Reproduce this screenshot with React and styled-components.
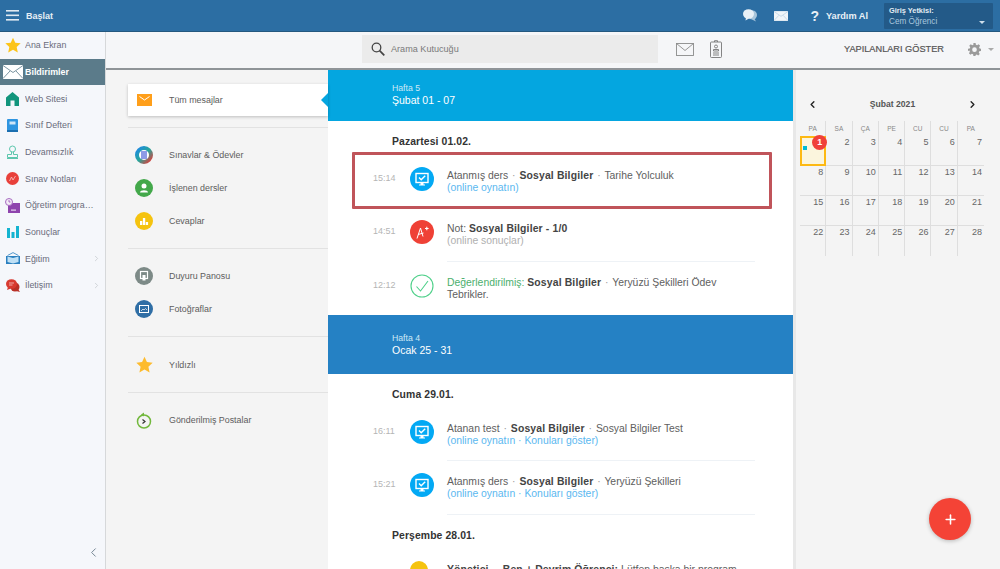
import React from 'react';
import styled, { createGlobalStyle } from 'styled-components';
import { ChevronLeft, ChevronRight, Plus } from 'lucide-react';

const GlobalStyle = createGlobalStyle`
  html, body { margin: 0; height: 100%; overflow: hidden; }
  body { font-family: "Liberation Sans", Arial, sans-serif; background: #f4f4f4; color: #555; }
  *, *::before, *::after { box-sizing: border-box; }
`;

// * =================================
// *       Icons
// * =================================
const Star = ({ size = 16, color = '#fcc419' }) => (
  <svg width={size} height={size} viewBox="0 0 24 24"><path fill={color} d="M12 1l3.4 7.6 8.1.9-6 5.5 1.7 8.2L12 19l-7.2 4.2 1.7-8.2-6-5.5 8.1-.9z" /></svg>
);
const Envelope = ({ w = 20, h = 14, color = '#fff', line = '#5b7b8a' }) => (
  <svg width={w} height={h} viewBox="0 0 20 14"><rect width="20" height="14" fill={color} /><path d="M0 .5l10 7 10-7M0 13.5l7-7.5M20 13.5l-7-7.5" fill="none" stroke={line} strokeWidth=".8" /></svg>
);
const House = () => (
  <svg width="13" height="14" viewBox="0 0 13 14"><path fill="#12957c" d="M6.500 0L13 5.500V14H8.500V8.500h-4V14H0V5.500z" /></svg>
);
const Book = () => (
  <svg width="11" height="13" viewBox="0 0 11 13"><rect width="11" height="13" rx="1" fill="#2f95e0" /><rect x="2.500" y="2.500" width="6" height="3" fill="#cfe6f8" /><rect y="11" width="11" height="2" fill="#1b6fb0" /></svg>
);
const Stamp = () => (
  <svg width="13" height="14" viewBox="0 0 13 14" fill="none" stroke="#5cc6ad" strokeWidth="1"><circle cx="6.500" cy="4" r="3" /><path d="M5.500 7v2.500H1.500v3h10v-3h-4V7M1 13.500h11" /></svg>
);
const GradeBadge = () => (
  <svg width="13" height="13" viewBox="0 0 13 13"><circle cx="6.500" cy="6.500" r="6.500" fill="#e8403a" /><path d="M3.500 9l2-4 1.500 3 2.500-4" fill="none" stroke="#f6c9c6" strokeWidth=".8" /></svg>
);
const Planner = () => (
  <svg width="15" height="15" viewBox="0 0 15 15"><rect x="3" y="5" width="12" height="10" fill="#8e44ad" /><rect x="6" y="11.500" width="5" height="1.200" fill="#e5d4ee" /><circle cx="4" cy="4" r="3.500" fill="#f3eaf7" stroke="#a66bc0" /><path d="M4 2v2h1.500" fill="none" stroke="#8e44ad" strokeWidth=".7" /></svg>
);
const Bars = () => (
  <svg width="12" height="12" viewBox="0 0 12 12" fill="#14b4d0"><rect y="2" width="3" height="10" /><rect x="4.500" y="6" width="3" height="6" /><rect x="9" width="3" height="12" /></svg>
);
const OpenBook = () => (
  <svg width="14" height="13" viewBox="0 0 14 13"><path fill="#2a7fbf" d="M0 4h14v8H0z" /><path fill="#bfe0f5" d="M1.500 4.500L7 6v5.500L1.500 10zM12.500 4.500L7 6v5.500l5.500-1.500z" /><path fill="none" stroke="#2a7fbf" strokeWidth=".8" d="M1.500 3.500L7 .6l5.500 2.900" /></svg>
);
const Bubbles = () => (
  <svg width="14" height="13" viewBox="0 0 14 13"><circle cx="9" cy="8" r="4.500" fill="#b93027" /><path fill="#b93027" d="M12 10l2 3-4-1z" /><ellipse cx="5.500" cy="5" rx="5.500" ry="4.800" fill="#d83a30" /><path fill="#d83a30" d="M2 8l-1 3 4-1.500z" /><path stroke="#f6c9c6" strokeWidth=".8" d="M3 4h5M3 6h3.500" /></svg>
);
const Hamburger = () => (
  <svg width="13" height="11" viewBox="0 0 13 11" fill="#dfe9f2"><rect width="13" height="1.600" /><rect y="4.500" width="13" height="1.600" /><rect y="9" width="13" height="1.600" /></svg>
);
const Chat = () => (
  <svg width="14" height="13" viewBox="0 0 14 13"><ellipse cx="9.500" cy="6" rx="4.500" ry="4.500" fill="#a9c6dc" /><path fill="#a9c6dc" d="M11 9l2 3.500-4-2z" /><ellipse cx="5.500" cy="5" rx="5.500" ry="4.800" fill="#e8f0f6" /><path fill="#e8f0f6" d="M3 8.500l-.5 3L6 9.500z" /></svg>
);
const Search = () => (
  <svg width="14" height="14" viewBox="0 0 14 14" fill="none" stroke="#444" strokeWidth="1.300"><circle cx="5.500" cy="5.500" r="4.300" /><path d="M8.600 8.600L13.300 13.300" strokeWidth="1.700" /></svg>
);
const OutlineMail = () => (
  <svg width="18" height="13" viewBox="0 0 18 13" fill="none" stroke="#8b8b8b" strokeWidth=".9"><rect x=".5" y=".5" width="17" height="12" /><path d="M.5.500L9 7.500 17.500.5" /></svg>
);
const Clipboard = () => (
  <svg width="12" height="18" viewBox="0 0 12 18" fill="none" stroke="#777" strokeWidth=".9"><rect x=".5" y="2" width="11" height="15.500" rx="1" /><path d="M4.500 2V.7h3V2" /><circle cx="6" cy="6.500" r="1.500" /><path d="M3.500 11V9.500h5V11zM3 13h6M3 15h6" /></svg>
);
const Gear = () => (
  <svg width="13" height="13" viewBox="0 0 24 24"><path fill="#9a9a9a" fillRule="evenodd" d="M10 0h4l.6 3.200 2.200.9L19.500 2.300l2.800 2.800-1.800 2.700.9 2.200L24 10.600v4l-3.200.6-.9 2.200 1.800 2.700-2.800 2.800-2.700-1.800-2.200.9L14 24h-4l-.6-3.200-2.200-.9-2.700 1.800-2.800-2.800 1.800-2.700-.9-2.200L0 14.600v-4l3.200-.6.9-2.200L2.300 5.100l2.800-2.800 2.700 1.800 2.200-.9zM12 8a4.300 4.300 0 100 8.600A4.300 4.300 0 0012 8z" /></svg>
);
const MailTile = () => (
  <svg width="15" height="12" viewBox="0 0 15 12"><rect width="15" height="12" fill="#ff9f1a" /><path d="M2.500 2.500L7.500 6l5-3.500" fill="none" stroke="#fff" strokeWidth="1" /></svg>
);
const Disc = ({ color, children, ring }) => (
  <svg width="18" height="18" viewBox="0 0 18 18">
    <circle cx="9" cy="9" r={ring ? 7 : 9} fill={color} stroke={ring ? 'url(#examRing)' : 'none'} strokeWidth={ring ? 4 : 0} />
    {children}
  </svg>
);
const Resend = () => (
  <svg width="16" height="17" viewBox="0 0 16 17" fill="none"><circle cx="8" cy="9.500" r="6.500" stroke="#72b83c" strokeWidth="1.500" /><path d="M8 .5v4L5 2.500z" fill="#72b83c" /><path d="M6.500 7.500l2.500 2-2.500 2" stroke="#333" strokeWidth="1.200" /></svg>
);
const Monitor = () => (
  <svg width="24" height="24" viewBox="0 0 24 24"><circle cx="12" cy="12" r="12" fill="#03a9f4" /><rect x="6" y="6.500" width="12" height="9" fill="none" stroke="#fff" strokeWidth="1.400" /><path d="M9 10.500l2.200 2.200 4-4" fill="none" stroke="#fff" strokeWidth="1.400" /><path d="M10.500 15.500h3v2h1.500v1H9v-1h1.500z" fill="#fff" /></svg>
);
const Grade = () => (
  <svg width="24" height="24" viewBox="0 0 24 24"><circle cx="12" cy="12" r="12" fill="#ef4136" /><path d="M7 18.500L10.500 8l2.500 8.500M8 14.500l5.500-1.500" fill="none" stroke="#fff" strokeWidth="1" /><path d="M15 8.500h3.600M16.800 6.700v3.600" stroke="#fff" strokeWidth="1.100" /></svg>
);
const Checked = () => (
  <svg width="24" height="24" viewBox="0 0 24 24" fill="none"><circle cx="12" cy="12" r="11" stroke="#4fd08a" strokeWidth="1.100" /><path d="M6.500 12.500l4 4.500 7.500-10" stroke="#4fd08a" strokeWidth="1.100" /></svg>
);

// * =================================
// *       Data
// * =================================
const NAV = [
  { label: 'Ana Ekran', icon: <Star /> },
  { label: 'Bildirimler', icon: <Envelope />, active: true },
  { label: 'Web Sitesi', icon: <House /> },
  { label: 'Sınıf Defteri', icon: <Book /> },
  { label: 'Devamsızlık', icon: <Stamp /> },
  { label: 'Sınav Notları', icon: <GradeBadge /> },
  { label: 'Öğretim programı', icon: <Planner /> },
  { label: 'Sonuçlar', icon: <Bars /> },
  { label: 'Eğitim', icon: <OpenBook />, more: true },
  { label: 'İletişim', icon: <Bubbles />, more: true },
];

const FOLDERS = [
  [
    { label: 'Sınavlar & Ödevler', icon: <Disc color="#fff" ring><rect x="6" y="5" width="6" height="8" fill="#8d9be6" /></Disc> },
    { label: 'İşlenen dersler', icon: <Disc color="#43a84a"><circle cx="9" cy="7" r="2.500" fill="#fff" /><path d="M5 13.500c0-3 8-3 8 0z" fill="#fff" /></Disc> },
    { label: 'Cevaplar', icon: <Disc color="#f5c30f"><path d="M5 13V9h2.300v4zM7.900 13V6h2.300v7zM10.800 13v-3h2.300v3z" fill="#fff" /></Disc> },
  ],
  [
    { label: 'Duyuru Panosu', icon: <Disc color="#7d8a87"><rect x="5.500" y="4.500" width="7" height="7" fill="none" stroke="#fff" strokeWidth="1.200" /><path d="M7.500 8h3v5.500h-3z" fill="#fff" /></Disc> },
    { label: 'Fotoğraflar', icon: <Disc color="#2f6ea5"><rect x="4.500" y="5.500" width="9" height="7" fill="none" stroke="#fff" strokeWidth="1" /><path d="M6 11l2-2 1 1 1.500-1.500 1.500 1.500" fill="none" stroke="#fff" strokeWidth=".7" /></Disc> },
  ],
  [{ label: 'Yıldızlı', icon: <Star size={17} color="#fdbb2d" /> }],
  [{ label: 'Gönderilmiş Postalar', icon: <Resend /> }],
];

const DAYS = ['PA', 'SA', 'ÇA', 'PE', 'CU', 'CU', 'PA'];
const DATES = Array.from({ length: 28 }, (_, i) => i + 1);

const App = () => (
  <Page>
    <GlobalStyle />
    <TopBar>
      <BrandButton><Hamburger /><span>Başlat</span></BrandButton>
      <TopActions>
        <Chat />
        <MailSlot><Envelope w={14} h={10} color="#f2f6f9" line="#a9c6dc" /></MailSlot>
        <HelpLink><HelpMark>?</HelpMark>Yardım Al</HelpLink>
        <RoleBox>
          <RoleLabel>Giriş Yetkisi:</RoleLabel>
          <RoleValue>Cem Öğrenci<RoleCaret /></RoleValue>
        </RoleBox>
      </TopActions>
    </TopBar>

    <Body>
      <Sidebar>
        {NAV.map((item) => (
          <NavItem key={item.label} $active={item.active}>
            <NavIcon>{item.icon}</NavIcon>
            <NavLabel>{item.label}</NavLabel>
            {item.more && <ChevronRight size={9} color="#c4c8cc" />}
          </NavItem>
        ))}
        <Collapse><ChevronLeft size={15} color="#6d7f8d" strokeWidth={1.5} /></Collapse>
      </Sidebar>

      <Main>
        <Toolbar>
          <SearchBox><Search /><span>Arama Kutucuğu</span></SearchBox>
          <ToolIcons><OutlineMail /><Clipboard /></ToolIcons>
          <ShowDone>YAPILANLARI GÖSTER</ShowDone>
          <Settings><Gear /><SettingsCaret /></Settings>
        </Toolbar>

        <Columns>
          <FolderColumn>
            <svg width="0" height="0" style={{ position: 'absolute' }}>
              <defs>
                <linearGradient id="examRing" x1="0" y1="0" x2="1" y2="1">
                  <stop offset="0" stopColor="#1e88e5" />
                  <stop offset=".5" stopColor="#26a69a" />
                  <stop offset="1" stopColor="#e53935" />
                </linearGradient>
              </defs>
            </svg>
            <FolderGroup $first>
              <SelectedFolder>
                <FolderIcon><MailTile /></FolderIcon>
                <FolderLabel>Tüm mesajlar</FolderLabel>
              </SelectedFolder>
            </FolderGroup>
            {FOLDERS.map((group) => (
              <FolderGroup key={group[0].label}>
                {group.map((f) => (
                  <Folder key={f.label}>
                    <FolderIcon>{f.icon}</FolderIcon>
                    <FolderLabel>{f.label}</FolderLabel>
                  </Folder>
                ))}
              </FolderGroup>
            ))}
          </FolderColumn>

          <Feed>
            <WeekBand $color="#04a6e0" $height={51} $lift={4}>
              <WeekNo>Hafta 5</WeekNo>
              <WeekRange>Şubat 01 - 07</WeekRange>
            </WeekBand>
            <DayTitle>Pazartesi 01.02.</DayTitle>
            <Row $highlight>
              <Time>15:14</Time>
              <RowIcon><Monitor /></RowIcon>
              <RowText $plain>
                Atanmış ders <Dot>·</Dot> <b>Sosyal Bilgiler</b> <Dot>·</Dot> Tarihe Yolculuk
                <br /><Link>(online oynatın)</Link>
              </RowText>
            </Row>
            <Row>
              <Time>14:51</Time>
              <RowIcon><Grade /></RowIcon>
              <RowText>
                Not: <b>Sosyal Bilgiler - 1/0</b>
                <br /><Muted>(online sonuçlar)</Muted>
              </RowText>
            </Row>
            <Row>
              <Time>12:12</Time>
              <RowIcon><Checked /></RowIcon>
              <RowText $plain>
                <Graded>Değerlendirilmiş:</Graded> <b>Sosyal Bilgiler</b> <Dot>·</Dot> Yeryüzü Şekilleri Ödev
                <br />Tebrikler.
              </RowText>
            </Row>

            <WeekBand $color="#2581c4" $height={59}>
              <WeekNo>Hafta 4</WeekNo>
              <WeekRange>Ocak 25 - 31</WeekRange>
            </WeekBand>
            <DayTitle>Cuma 29.01.</DayTitle>
            <Row>
              <Time>16:11</Time>
              <RowIcon><Monitor /></RowIcon>
              <RowText>
                Atanan test <Dot>·</Dot> <b>Sosyal Bilgiler</b> <Dot>·</Dot> Sosyal Bilgiler Test
                <br /><Link>(online oynatın · Konuları göster)</Link>
              </RowText>
            </Row>
            <Row>
              <Time>15:21</Time>
              <RowIcon><Monitor /></RowIcon>
              <RowText>
                Atanmış ders <Dot>·</Dot> <b>Sosyal Bilgiler</b> <Dot>·</Dot> Yeryüzü Şekilleri
                <br /><Link>(online oynatın · Konuları göster)</Link>
              </RowText>
            </Row>
            <DayTitle>Perşembe 28.01.</DayTitle>
            <Row>
              <Time />
              <RowIcon><Disc color="#f5c30f" /></RowIcon>
              <RowText>
                <b>Yönetici</b>&nbsp; <Dot>·</Dot> <b>Ben + Devrim Öğrenci:</b> Lütfen başka bir program
              </RowText>
            </Row>
          </Feed>

          <CalendarColumn>
            <CalendarNav>
              <ChevronLeft size={11} color="#222" strokeWidth={3} />
              <MonthTitle>Şubat 2021</MonthTitle>
              <ChevronRight size={11} color="#222" strokeWidth={3} />
            </CalendarNav>
            <CalendarGrid>
              {DAYS.map((d, i) => <DayHead key={i}>{d}</DayHead>)}
              {DATES.map((n) => (
                <DateCell key={n} $today={n === 1}>
                  {n === 1 ? <><CountBadge>1</CountBadge><EventDot /></> : n}
                </DateCell>
              ))}
            </CalendarGrid>
          </CalendarColumn>
        </Columns>
      </Main>
    </Body>

    <Fab><Plus size={15} color="#fff" strokeWidth={2.5} /></Fab>
  </Page>
);

//=================================
//       Styled-Component
//=================================

const Page = styled.div`
  position: relative;
  display: flex;
  flex-direction: column;
  height: 100vh;
  overflow: hidden;
`;

const TopBar = styled.header`
  display: flex;
  align-items: center;
  justify-content: space-between;
  flex: 0 0 32px;
  padding: 0 7px 0 6px;
  background: #2c6ea3;
  border-bottom: 1px solid #24587f;
  color: #fff;
`;

const BrandButton = styled.div`
  display: flex;
  align-items: center;
  gap: 7px;
  font-size: 9px;
  font-weight: bold;
  color: #e6eef5;
`;

const TopActions = styled.div`
  display: flex;
  align-items: center;
`;

const MailSlot = styled.span`
  display: flex;
  margin-left: 17px;
`;

const HelpLink = styled.div`
  display: flex;
  align-items: center;
  margin: 0 16px 0 22px;
  font-size: 9.2px;
  font-weight: bold;
  color: #e9f0f6;
`;

const HelpMark = styled.span`
  margin-right: 7px;
  font-size: 14px;
`;

const RoleBox = styled.div`
  width: 109px;
  height: 26px;
  padding: 3px 5px;
  background: #235a88;
  border-radius: 1px;
`;

const RoleLabel = styled.div`
  font-size: 7.4px;
  font-weight: bold;
  line-height: 9px;
  color: #e4edf4;
`;

const RoleValue = styled.div`
  display: flex;
  justify-content: space-between;
  align-items: center;
  margin-top: 1px;
  font-size: 8.2px;
  line-height: 11px;
  color: #a9c7de;
`;

const RoleCaret = styled.i`
  margin: 3px 3px 0 0;
  border: 3px solid transparent;
  border-top: 3px solid #cfdfeb;
  border-bottom: 0;
`;

const Body = styled.div`
  display: flex;
  flex: 1;
  min-height: 0;
`;

const Sidebar = styled.nav`
  display: flex;
  flex-direction: column;
  flex: 0 0 106px;
  min-width: 0;
  overflow: hidden;
  background: #f5f7fb;
  border-right: 1px solid #d6d8da;
`;

const NavItem = styled.div`
  display: flex;
  align-items: center;
  flex: 0 0 26.67px;
  padding-right: 4px;
  background: ${(p) => (p.$active ? '#5b7b8a' : 'transparent')};
  color: ${(p) => (p.$active ? '#fff' : '#6a6c7c')};
  font-weight: ${(p) => (p.$active ? 'bold' : 'normal')};
  font-size: 8.9px;
`;

const NavIcon = styled.span`
  display: flex;
  align-items: center;
  justify-content: center;
  flex: 0 0 25px;
`;

const NavLabel = styled.span`
  flex: 1;
  min-width: 0;
  overflow: hidden;
  white-space: nowrap;
  text-overflow: ellipsis;
  padding-right: 7px;
`;

const Collapse = styled.div`
  display: flex;
  justify-content: flex-end;
  margin-top: auto;
  padding: 0 4px 9px 0;
`;

const Main = styled.main`
  display: flex;
  flex-direction: column;
  flex: 1;
  min-width: 0;
`;

const Toolbar = styled.div`
  display: flex;
  align-items: center;
  flex: 0 0 38px;
  padding: 0 12px 2px 256px;
  background: #f5f6f8;
  border-bottom: 2px solid #8f9498;
`;

const SearchBox = styled.div`
  display: flex;
  align-items: center;
  gap: 6px;
  flex: 0 0 296px;
  height: 28px;
  padding-left: 9px;
  background: #ebebeb;
  font-size: 9.1px;
  color: #7a7a7a;
`;

const ToolIcons = styled.div`
  display: flex;
  align-items: center;
  gap: 16px;
  margin-left: 18px;
`;

const ShowDone = styled.div`
  margin-left: 122px;
  white-space: nowrap;
  font-size: 9.2px;
  color: #555;
  -webkit-text-stroke: 0.2px #555;
`;

const Settings = styled.div`
  display: flex;
  align-items: center;
  gap: 7px;
  margin-left: 24px;
`;

const SettingsCaret = styled.i`
  border: 3px solid transparent;
  border-top: 3px solid #aaa;
  border-bottom: 0;
`;

const Columns = styled.div`
  display: flex;
  flex: 1;
  min-height: 0;
`;

const FolderColumn = styled.aside`
  flex: 0 0 222px;
  padding: 14px 0 0 22px;
  background: #f4f4f4;
`;

const FolderGroup = styled.div`
  padding: ${(p) => (p.$first ? '0 0 11px' : '11px 0')};
  border-bottom: 1px solid #e2e2e2;
  &:last-child { border-bottom: 0; }
`;

const Folder = styled.div`
  display: flex;
  align-items: center;
  height: 32.7px;
  padding-left: 7px;
`;

const SelectedFolder = styled(Folder)`
  position: relative;
  height: 32px;
  background: #fff;
  box-shadow: 0 1px 3px rgba(0, 0, 0, 0.22);
  &::after {
    content: '';
    position: absolute;
    right: 0;
    top: 9px;
    width: 7px;
    height: 14px;
    border: 7px solid transparent;
    border-right-color: #04a6e0;
    border-left: 0;
  }
`;

const FolderIcon = styled.span`
  display: flex;
  align-items: center;
  justify-content: center;
  flex: 0 0 18px;
  margin-right: 16px;
`;

const FolderLabel = styled.span`
  font-size: 8.9px;
  color: #5d5d5d;
`;

const Feed = styled.section`
  flex: 0 0 465px;
  overflow: hidden;
  background: #fff;
`;

const WeekBand = styled.div`
  display: flex;
  flex-direction: column;
  justify-content: center;
  height: ${(p) => p.$height}px;
  padding: 0 0 ${(p) => p.$lift || 0}px 64px;
  background: ${(p) => p.$color};
  color: #fff;
`;

const WeekNo = styled.div`
  font-size: 8.7px;
  line-height: 12px;
  color: #cfe9f6;
`;

const WeekRange = styled.div`
  font-size: 10.5px;
  line-height: 12px;
`;

const DayTitle = styled.h3`
  margin: 0;
  height: 34px;
  padding: 14px 0 0 64px;
  font-size: 10.4px;
  line-height: 13px;
  font-weight: bold;
  letter-spacing: 0.1px;
  color: #333;
`;

const Row = styled.div`
  position: relative;
  display: flex;
  height: 53.33px;
  padding-left: 45px;
  ${(p) => p.$highlight && `
    &::after {
      content: '';
      position: absolute;
      left: 24px;
      top: -3px;
      width: 420px;
      height: 57px;
      border: 3px solid #c0545a;
      border-radius: 1px;
    }
  `}
`;

const Time = styled.div`
  flex: 0 0 37px;
  padding-top: 17px;
  font-size: 9px;
  line-height: 12px;
  color: #b5b5b5;
`;

const RowIcon = styled.div`
  flex: 0 0 37px;
  padding-top: 12px;
  line-height: 0;
`;

const RowText = styled.div`
  flex: 0 0 308px;
  padding-top: 15px;
  font-size: 10.4px;
  line-height: 12px;
  color: #606060;
  border-bottom: 1px solid ${(p) => (p.$plain ? 'transparent' : '#eef2f6')};
  b { color: #444; letter-spacing: 0.15px; }
`;

const Dot = styled.span`
  margin: 0 1px;
  color: #999;
`;

const Link = styled.span`
  color: #5bb8f0;
`;

const Muted = styled.span`
  color: #b0b0b0;
`;

const Graded = styled.span`
  color: #4caf6d;
`;

const CalendarColumn = styled.aside`
  flex: 1;
  padding: 26px 16px 0 4px;
  background: #f4f4f4;
  border-left: 3px solid #e8e8e8;
`;

const CalendarNav = styled.div`
  display: flex;
  align-items: center;
  justify-content: space-between;
  height: 16px;
  padding: 0 6px 0 7px;
  margin-bottom: 9px;
`;

const MonthTitle = styled.div`
  font-size: 8.6px;
  font-weight: bold;
  color: #555;
`;

const CalendarGrid = styled.div`
  display: grid;
  grid-template-columns: repeat(7, 1fr);
  grid-template-rows: 15px repeat(4, 30px);
`;

const DayHead = styled.div`
  text-align: center;
  font-size: 6.5px;
  line-height: 15px;
  color: #888;
  border-right: 1px solid #dedede;
  &:nth-child(7) { border-right: 0; }
`;

const DateCell = styled.div`
  position: relative;
  padding: 0 2px 0 0;
  text-align: right;
  font-size: 9px;
  line-height: 12px;
  color: #666;
  background: ${(p) => (p.$today ? '#fbf5dd' : 'transparent')};
  border-right: 1px solid #dedede;
  border-bottom: 1px solid #dedede;
  ${(p) => p.$today && 'outline: 2px solid #fdb913; outline-offset: -2px;'}
  &:nth-child(7n) { border-right: 0; }
  &:nth-child(n + 29) { border-bottom: 0; }
`;

const CountBadge = styled.span`
  position: absolute;
  right: -2px;
  top: -1px;
  width: 15px;
  height: 15px;
  border-radius: 50%;
  background: #f0403a;
  color: #fff;
  font-size: 9px;
  font-weight: bold;
  line-height: 15px;
  text-align: center;
`;

const EventDot = styled.i`
  position: absolute;
  left: 3px;
  top: 10px;
  width: 4px;
  height: 4px;
  background: #00bcd4;
`;

const Fab = styled.button`
  position: absolute;
  right: 29px;
  bottom: 29px;
  display: flex;
  align-items: center;
  justify-content: center;
  width: 42px;
  height: 42px;
  padding: 0;
  border: 0;
  border-radius: 50%;
  background: #f44336;
  box-shadow: 0 1px 4px rgba(0, 0, 0, 0.25);
`;

export default App;
